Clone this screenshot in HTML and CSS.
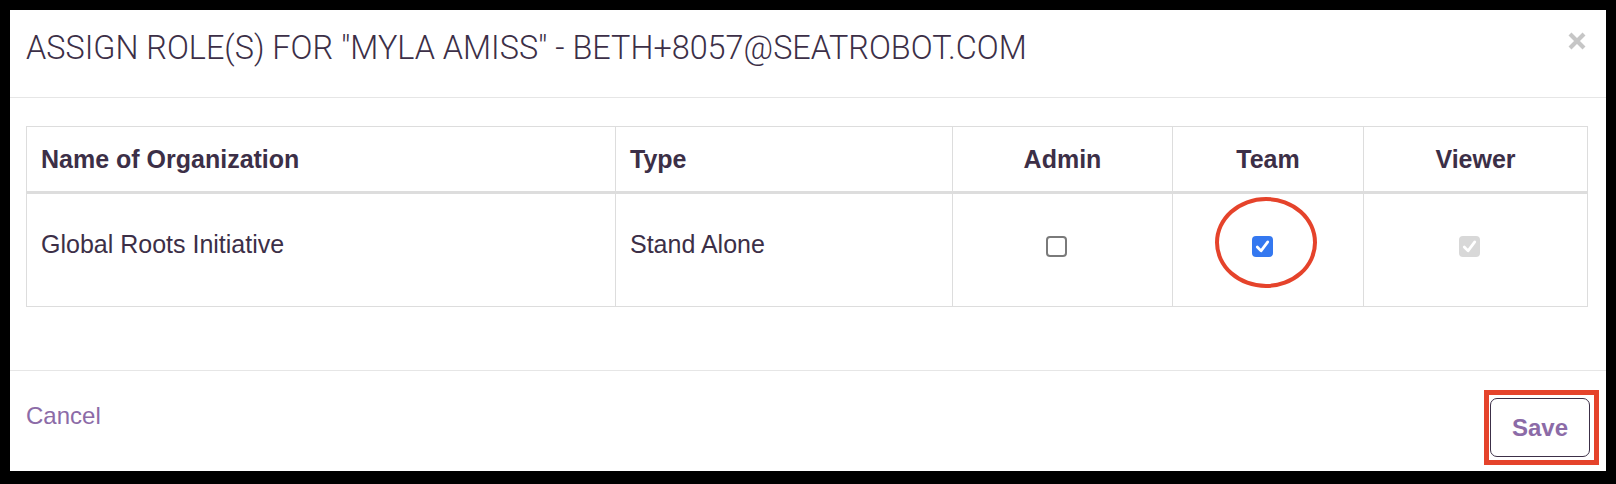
FILE: index.html
```html
<!DOCTYPE html>
<html lang="en">
<head>
<meta charset="utf-8">
<title>Assign roles</title>
<link rel="stylesheet" href="styles.css">
</head>
<body>
<div class="modal">
  <div class="modal-header">
    <h4 class="modal-title">ASSIGN ROLE(S) FOR "MYLA AMISS" - BETH+8057@SEATROBOT.COM</h4>
    <span class="close" aria-label="Close">
      <svg width="20" height="20" viewBox="0 0 20 20"><path d="M3 3 L17 17 M17 3 L3 17" stroke="#c6c6c6" stroke-width="4.2" stroke-linecap="butt"/></svg>
    </span>
  </div>
  <div class="modal-body">
    <table class="roles">
      <colgroup>
        <col class="c-name"><col class="c-type"><col class="c-admin"><col class="c-team"><col class="c-viewer">
      </colgroup>
      <thead>
        <tr>
          <th>Name of Organization</th>
          <th>Type</th>
          <th class="center">Admin</th>
          <th class="center">Team</th>
          <th class="center">Viewer</th>
        </tr>
      </thead>
      <tbody>
        <tr>
          <td>Global Roots Initiative</td>
          <td>Stand Alone</td>
          <td class="center"><span class="cb"></span></td>
          <td class="center team-cell"><span class="cb checked"><svg viewBox="0 0 20 20"><path d="M5 10.5 L8.6 14.2 L15 5.6" fill="none" stroke="#fff" stroke-width="2.6" stroke-linecap="round" stroke-linejoin="round"/></svg></span><span class="mark-ellipse"></span></td>
          <td class="center"><span class="cb disabled"><svg viewBox="0 0 20 20"><path d="M5 10.5 L8.6 14.2 L15 5.6" fill="none" stroke="#fff" stroke-width="2.6" stroke-linecap="round" stroke-linejoin="round"/></svg></span></td>
        </tr>
      </tbody>
    </table>
  </div>
  <div class="modal-footer">
    <a class="cancel" href="#">Cancel</a>
    <button class="save" type="button">Save</button>
    <span class="mark-rect"></span>
  </div>
</div>
</body>
</html>
```

FILE: styles.css
```css
html, body {
  margin: 0;
  padding: 0;
  background: #000;
}
body {
  width: 1616px;
  height: 484px;
  overflow: hidden;
}
.modal {
  margin: 10px 10px 0 10px;
  width: 1596px;
  height: 461px;
  background: #fff;
  display: flex;
  flex-direction: column;
  color: #3c2f47;
}
.modal-header {
  height: 87px;
  box-sizing: content-box;
  border-bottom: 1px solid #e6e6e6;
  display: flex;
  align-items: flex-start;
  justify-content: space-between;
  padding: 0 19px 0 16px;
}
.modal-title {
  margin: 19px 0 0;
  font-family: Roboto, "Liberation Sans", sans-serif;
  font-weight: 300;
  font-size: 32.4px;
  line-height: 38px;
  color: #3c2f47;
  letter-spacing: 0;
  white-space: nowrap;
}
.close {
  display: block;
  margin-top: 21px;
  width: 20px;
  height: 20px;
}
.close svg { display: block; }
.modal-body {
  padding: 28px 18px 63px 16px;
  border-bottom: 1px solid #e6e6e6;
}
.roles {
  width: 100%;
  border-collapse: collapse;
  table-layout: fixed;
  border: 1px solid #dddddd;
  font-family: "Liberation Sans", Arial, sans-serif;
  font-size: 25px;
  color: #3c2f47;
}
.c-name { width: 589px; }
.c-type { width: 337px; }
.c-admin { width: 220px; }
.c-team { width: 191px; }
.roles th, .roles td {
  border: 1px solid #dddddd;
  text-align: left;
  padding: 0 14px;
}
.roles th {
  height: 64px;
  font-weight: bold;
  border-bottom: 3px solid #dddddd;
  vertical-align: middle;
  line-height: 30px;
}
.roles td {
  height: 100px;
  vertical-align: middle;
  line-height: 30px;
  padding-bottom: 12px;
  padding-top: 0;
}
.roles .center { text-align: center; }
.team-cell { position: relative; }
.cb {
  display: inline-block;
  vertical-align: middle;
  width: 21px;
  height: 21px;
  box-sizing: border-box;
  border: 2px solid #7a7a7a;
  border-radius: 4px;
  background: #fff;
  margin-right: 12px;
}
.cb svg { display: block; width: 100%; height: 100%; }
.cb.checked {
  border: none;
  background: #3478f0;
}
.cb.disabled {
  border: none;
  background: #d8d8d8;
}
.mark-ellipse {
  position: absolute;
  left: 42px;
  top: 3px;
  width: 102px;
  height: 91px;
  box-sizing: border-box;
  border: 4px solid #e5432b;
  border-radius: 50%;
}
.modal-footer {
  position: relative;
  flex: 1;
  display: flex;
  justify-content: space-between;
  align-items: flex-start;
  padding: 0 16px;
}
.cancel {
  margin-top: 31px;
  font-family: "Liberation Sans", Arial, sans-serif;
  font-size: 24px;
  line-height: 28px;
  color: #8c6ba7;
  text-decoration: none;
}
.save {
  margin-top: 27px;
  width: 100px;
  height: 59px;
  border: 1px solid #3c2f47;
  border-radius: 7px;
  background: #fff;
  font-family: "Liberation Sans", Arial, sans-serif;
  font-weight: bold;
  font-size: 24px;
  color: #8c6ba7;
  padding: 0;
}
.mark-rect {
  position: absolute;
  left: 1474px;
  top: 19px;
  width: 115px;
  height: 75px;
  box-sizing: border-box;
  border: 5px solid #e5432b;
}
```
